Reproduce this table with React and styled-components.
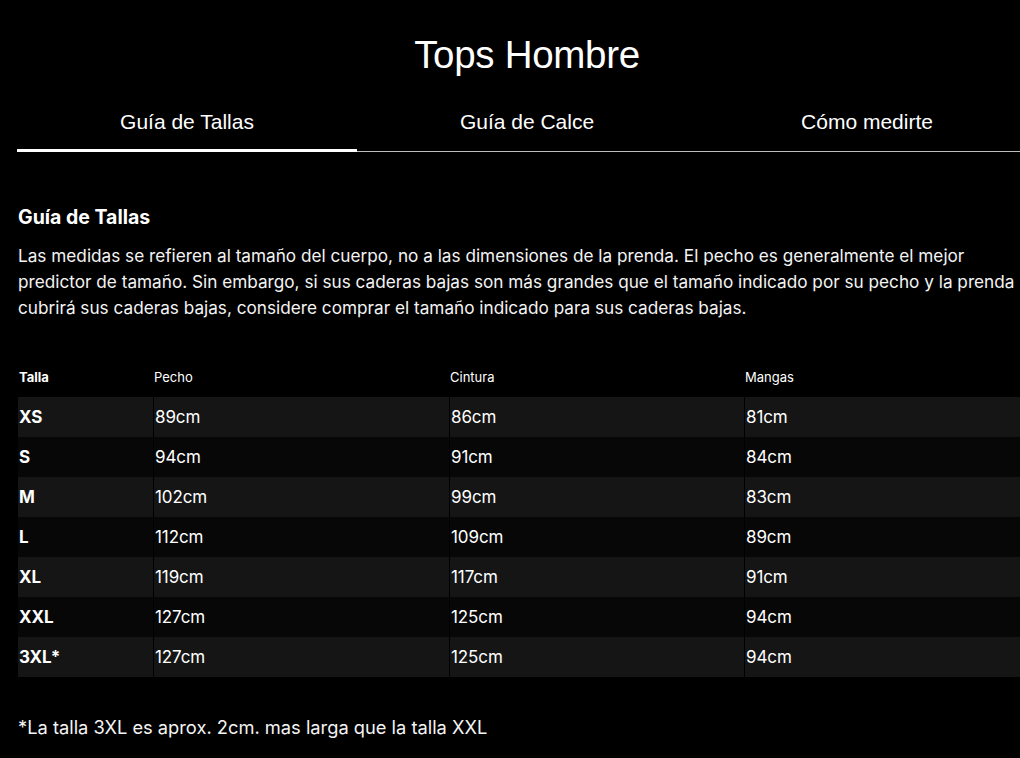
import React from "react";
import styled, { createGlobalStyle } from "styled-components";

const GlobalStyle = createGlobalStyle`
  html, body {
    margin: 0;
    padding: 0;
    background: #000;
    overflow: hidden;
  }
  body {
    font-family: "Inter", "Liberation Sans", sans-serif;
    color: #fff;
  }
`;

const Page = styled.div`
  width: 1020px;
  padding: 30px 0 0 17px;
  background: #000;
  min-height: 758px;
  box-sizing: content-box;
`;

const Title = styled.h1`
  margin: 0;
  text-align: center;
  font-family: "Liberation Sans", Arial, sans-serif;
  font-weight: 400;
  font-size: 38.5px;
  line-height: 50px;
  letter-spacing: -0.3px;
  color: #fff;
`;

const Tabs = styled.div`
  display: grid;
  grid-template-columns: repeat(3, 340px);
  margin-top: 29px;
`;

const Tab = styled.div`
  text-align: center;
  font-family: "Liberation Sans", Arial, sans-serif;
  font-size: 21px;
  line-height: 26px;
  color: #fff;
  padding-bottom: ${(p) => (p.$active ? "14px" : "16px")};
  border-bottom: ${(p) => (p.$active ? "3px solid #fff" : "1px solid #bdbdbd")};
`;

const Heading = styled.h2`
  margin: 53px 0 0 1px;
  font-size: 19.5px;
  font-weight: 700;
  line-height: 24px;
`;

const Text = styled.p`
  margin: 14px 0 0 1px;
  font-size: 17.2px;
  line-height: 26px;
  white-space: nowrap;
  color: #f4f4f4;
`;

const Table = styled.div`
  margin: 36px 0 0 1px;
  width: 1020px;
`;

const Row = styled.div`
  display: grid;
  grid-template-columns: 135px 296px 295px 294px;
  height: 40px;
  align-items: center;
  background: ${(p) => (p.$head ? "#000" : p.$odd ? "#151515" : "#070707")};
`;

const Cell = styled.div`
  height: 100%;
  display: flex;
  align-items: center;
  box-sizing: border-box;
  padding-left: 1px;
  font-size: ${(p) => (p.$head ? "13px" : "17px")};
  font-weight: ${(p) => (p.$bold ? 700 : 400)};
  letter-spacing: ${(p) => (p.$head ? "0" : "-0.1px")};
  border-left: ${(p) => (p.$sep && !p.$head ? "1px solid #000" : "none")};
`;

const Note = styled.p`
  margin: 38px 0 0 1px;
  font-size: 18.3px;
  line-height: 24px;
  color: #f4f4f4;
`;

const rows = [
  ["XS", "89cm", "86cm", "81cm"],
  ["S", "94cm", "91cm", "84cm"],
  ["M", "102cm", "99cm", "83cm"],
  ["L", "112cm", "109cm", "89cm"],
  ["XL", "119cm", "117cm", "91cm"],
  ["XXL", "127cm", "125cm", "94cm"],
  ["3XL*", "127cm", "125cm", "94cm"],
];

export default function App() {
  return (
    <>
      <GlobalStyle />
      <Page>
        <Title>Tops Hombre</Title>
        <Tabs>
          <Tab $active>Guía de Tallas</Tab>
          <Tab>Guía de Calce</Tab>
          <Tab>Cómo medirte</Tab>
        </Tabs>
        <Heading>Guía de Tallas</Heading>
        <Text>
          Las medidas se refieren al tamaño del cuerpo, no a las dimensiones de la
          prenda. El pecho es generalmente el mejor
          <br />
          predictor de tamaño. Sin embargo, si sus caderas bajas son más grandes que el
          tamaño indicado por su pecho y la prenda
          <br />
          cubrirá sus caderas bajas, considere comprar el tamaño indicado para sus
          caderas bajas.
        </Text>
        <Table>
          <Row $head>
            <Cell $head $bold>Talla</Cell>
            <Cell $head>Pecho</Cell>
            <Cell $head>Cintura</Cell>
            <Cell $head>Mangas</Cell>
          </Row>
          {rows.map((r, i) => (
            <Row key={r[0]} $odd={i % 2 === 0}>
              <Cell $bold>{r[0]}</Cell>
              <Cell $sep>{r[1]}</Cell>
              <Cell $sep>{r[2]}</Cell>
              <Cell $sep>{r[3]}</Cell>
            </Row>
          ))}
        </Table>
        <Note>*La talla 3XL es aprox. 2cm. mas larga que la talla XXL</Note>
      </Page>
    </>
  );
}
